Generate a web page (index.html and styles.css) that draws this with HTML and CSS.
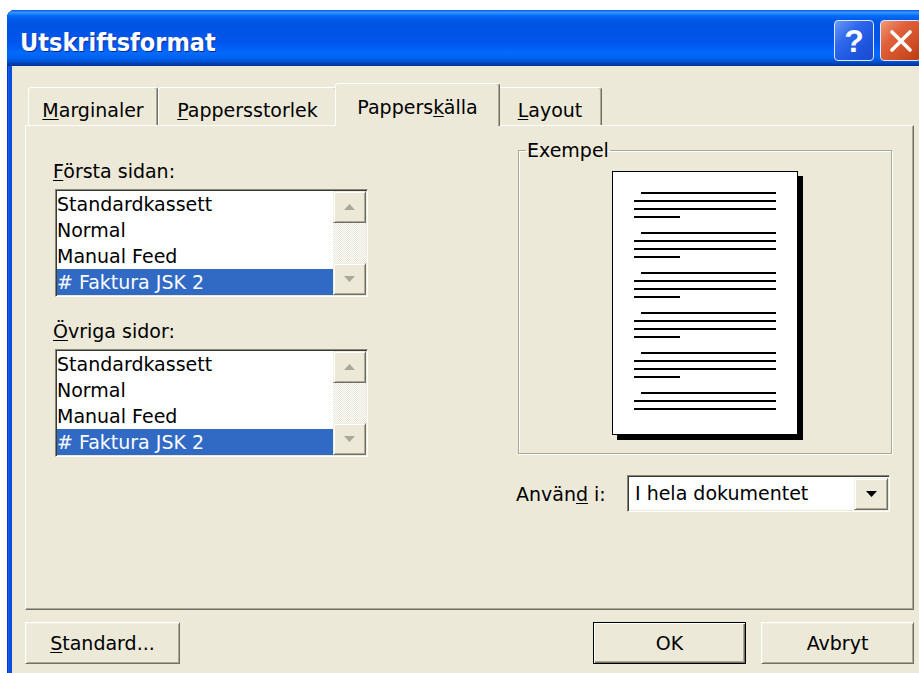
FILE: index.html
```html
<!DOCTYPE html>
<html lang="sv">
<head>
<meta charset="utf-8">
<title>Utskriftsformat</title>
<link rel="stylesheet" href="styles.css">
</head>
<body>
<div class="window">
  <div class="titlebar">
    <span class="title">Utskriftsformat</span>
    <div class="caption-buttons">
      <span class="cbtn help">?</span>
      <span class="cbtn close">
        <svg width="26" height="26" viewBox="0 0 26 26"><path d="M4 4 L22 22 M22 4 L4 22" stroke="#fff" stroke-width="3.6" stroke-linecap="round"/></svg>
      </span>
    </div>
  </div>

  <div class="client">
    <div class="tabs">
      <div class="tab tab-margins"><u>M</u>arginaler</div>
      <div class="tab tab-size"><u>P</u>appersstorlek</div>
      <div class="tab tab-source active">Pappers<u>k</u>älla</div>
      <div class="tab tab-layout"><u>L</u>ayout</div>
    </div>

    <div class="panel">
      <div class="col-left">
        <label class="field-label"><u>F</u>örsta sidan:</label>
        <div class="listbox">
          <ul class="items">
            <li>Standardkassett</li>
            <li>Normal</li>
            <li>Manual Feed</li>
            <li class="selected"># Faktura JSK 2</li>
          </ul>
          <div class="vscroll">
            <span class="sbtn"><svg width="11" height="6" viewBox="0 0 11 6"><polygon points="5.5,0 11,6 0,6" fill="#aca899"/></svg></span>
            <span class="track"></span>
            <span class="sbtn"><svg width="11" height="6" viewBox="0 0 11 6"><polygon points="0,0 11,0 5.5,6" fill="#aca899"/></svg></span>
          </div>
        </div>

        <label class="field-label"><u>Ö</u>vriga sidor:</label>
        <div class="listbox">
          <ul class="items">
            <li>Standardkassett</li>
            <li>Normal</li>
            <li>Manual Feed</li>
            <li class="selected"># Faktura JSK 2</li>
          </ul>
          <div class="vscroll">
            <span class="sbtn"><svg width="11" height="6" viewBox="0 0 11 6"><polygon points="5.5,0 11,6 0,6" fill="#aca899"/></svg></span>
            <span class="track"></span>
            <span class="sbtn"><svg width="11" height="6" viewBox="0 0 11 6"><polygon points="0,0 11,0 5.5,6" fill="#aca899"/></svg></span>
          </div>
        </div>
      </div>

      <div class="col-right">
        <fieldset class="group">
          <legend>Exempel</legend>
          <div class="page">
            <svg width="184" height="262" viewBox="0 0 184 262" fill="#000">
              <g>
                <rect x="28" y="20" width="135" height="2"/>
                <rect x="21" y="28" width="142" height="2"/>
                <rect x="21" y="36" width="142" height="2"/>
                <rect x="21" y="44" width="46" height="2"/>
              </g>
              <g transform="translate(0 40)">
                <rect x="28" y="20" width="135" height="2"/>
                <rect x="21" y="28" width="142" height="2"/>
                <rect x="21" y="36" width="142" height="2"/>
                <rect x="21" y="44" width="46" height="2"/>
              </g>
              <g transform="translate(0 80)">
                <rect x="28" y="20" width="135" height="2"/>
                <rect x="21" y="28" width="142" height="2"/>
                <rect x="21" y="36" width="142" height="2"/>
                <rect x="21" y="44" width="46" height="2"/>
              </g>
              <g transform="translate(0 120)">
                <rect x="28" y="20" width="135" height="2"/>
                <rect x="21" y="28" width="142" height="2"/>
                <rect x="21" y="36" width="142" height="2"/>
                <rect x="21" y="44" width="46" height="2"/>
              </g>
              <g transform="translate(0 160)">
                <rect x="28" y="20" width="135" height="2"/>
                <rect x="21" y="28" width="142" height="2"/>
                <rect x="21" y="36" width="142" height="2"/>
                <rect x="21" y="44" width="46" height="2"/>
              </g>
              <g transform="translate(0 200)">
                <rect x="28" y="20" width="135" height="2"/>
                <rect x="21" y="28" width="142" height="2"/>
                <rect x="21" y="36" width="142" height="2"/>
              </g>
            </svg>
          </div>
        </fieldset>

        <div class="apply-row">
          <span class="apply-label">Använ<u>d</u> i:</span>
          <div class="combo">
            <span class="combo-text">I hela dokumentet</span>
            <span class="combo-btn"><svg width="11" height="6" viewBox="0 0 11 6"><polygon points="0,0 11,0 5.5,6" fill="#000"/></svg></span>
          </div>
        </div>
      </div>
    </div>

    <div class="buttons">
      <button class="btn btn-wide"><u>S</u>tandard...</button>
      <button class="btn default">OK</button>
      <button class="btn">Avbryt</button>
    </div>
  </div>
</div>
</body>
</html>
```

FILE: styles.css
```css
html, body {
  margin: 0;
  height: 100%;
  overflow: hidden;
  background: #fff;
}

body {
  font-family: "DejaVu Sans", "Noto Sans", sans-serif;
  font-size: 19px;
  color: #000;
}

u {
  text-decoration: underline;
  text-underline-offset: 2px;
}

/* ---------- window frame ---------- */
.window {
  margin: 10px 0 0 7px;
  width: 922px;
  height: 663px;
  display: flex;
  flex-direction: column;
  background: #0b4fdf;
  border-radius: 8px 8px 0 0;
  box-shadow: inset 1px 0 #0831d9, inset 2px 0 #1660ea;
}

.titlebar {
  flex: none;
  height: 56px;
  display: flex;
  align-items: flex-start;
  padding: 0 8px 0 13px;
  border-radius: 8px 8px 0 0;
  background: linear-gradient(to bottom,
    #0058ee 0%, #3a93ff 4%, #288eff 6%, #127dff 8%, #036ffc 10%,
    #0262ee 14%, #0057e5 20%, #0054e3 24%, #0055eb 56%, #005bf5 66%,
    #026afe 76%, #0062ef 86%, #0052d6 92%, #0040ab 96%, #003092 100%);
}

.title {
  padding-top: 18px;
  font-family: "DejaVu Sans Condensed", "DejaVu Sans", sans-serif;
  font-stretch: condensed;
  font-weight: bold;
  font-size: 25px;
  line-height: 30px;
  color: #fff;
  text-shadow: 1px 1px 0 #0a2a9a;
}

.caption-buttons {
  margin-left: auto;
  margin-top: 10px;
  display: flex;
  gap: 6px;
}

.cbtn {
  box-sizing: border-box;
  width: 40px;
  height: 41px;
  border: 1px solid #dfe8fb;
  border-radius: 4px;
  display: flex;
  align-items: center;
  justify-content: center;
}

.help {
  background: linear-gradient(135deg, #6c9bf8 0%, #2f68ec 35%, #1d55de 70%, #1a4bcc 100%);
  color: #fff;
  font-family: "Liberation Sans", Arial, sans-serif;
  font-weight: bold;
  font-size: 32px;
  line-height: 1;
}

.close {
  width: 41px;
  background: linear-gradient(135deg, #f09a78 0%, #e0603a 35%, #d04e24 70%, #b83a14 100%);
}

/* ---------- dialog body ---------- */
.client {
  flex: 1;
  margin: 0 5px;
  padding: 17px 10px 0 13px;
  background: #ece9d8;
}

.tabs {
  display: flex;
  align-items: flex-end;
  height: 42px;
  margin-left: 3px;
}

.tab {
  box-sizing: border-box;
  height: 38px;
  padding-top: 11px;
  line-height: 22px;
  text-align: center;
  white-space: nowrap;
  background: #ece9d8;
  border: 1px solid #fff;
  border-bottom: none;
  border-right-color: #716f64;
  border-radius: 3px 3px 0 0;
  box-shadow: inset -1px 0 #aca899;
}

.tab-margins { width: 130px; }
.tab-size    { width: 179px; }
.tab-source  { width: 165px; }
.tab-layout  { width: 104px; }

.tab.active {
  height: 43px;
  padding-top: 12px;
  margin: 0 -2px -1px;
  position: relative;
  z-index: 1;
}

.panel {
  box-sizing: border-box;
  height: 485px;
  display: flex;
  justify-content: space-between;
  padding: 0 21px 0 27px;
  border: 1px solid #fff;
  border-right-color: #716f64;
  border-bottom-color: #716f64;
  box-shadow: inset -1px -1px #aca899;
}

/* ---------- paper source lists ---------- */
.col-left {
  width: 315px;
  padding-top: 34px;
}

.field-label {
  display: block;
  line-height: 22px;
  margin-bottom: 7px;
}

.listbox {
  box-sizing: border-box;
  width: 313px;
  height: 108px;
  margin: 0 0 23px 2px;
  padding: 1px;
  display: flex;
  background: #fff;
  border: 1px solid;
  border-color: #8a877a #fff #fff #8a877a;
  box-shadow: inset 1px 1px #3b3a33, inset -1px -1px #ece9d8;
}

.items {
  list-style: none;
  margin: 0;
  padding: 0;
  flex: 1;
}

.items li {
  height: 26px;
  line-height: 27px;
  white-space: nowrap;
}

.items li.selected {
  background: #316ac5;
  color: #fff;
}

.vscroll {
  width: 33px;
  display: flex;
  flex-direction: column;
}

.sbtn {
  box-sizing: border-box;
  height: 32px;
  display: flex;
  align-items: center;
  justify-content: center;
  background: #ece9d8;
  border: 1px solid;
  border-color: #f1efe2 #716f64 #716f64 #f1efe2;
  box-shadow: inset 1px 1px #fff, inset -1px -1px #aca899;
}

.track {
  flex: 1;
  background: repeating-conic-gradient(#fff 0 25%, #e9e6d8 0 50%) 0 0 / 2px 2px;
}

/* ---------- preview group ---------- */
.col-right {
  width: 374px;
  padding-top: 14px;
}

.group {
  margin: 0;
  padding: 0 0 18px;
  border: 1px solid #aca899;
  box-shadow: 1px 1px 0 #fff, inset 1px 1px 0 #fff;
}

.group legend {
  margin-left: 7px;
  padding: 0 1px;
  line-height: 20px;
}

.page {
  box-sizing: border-box;
  width: 186px;
  height: 264px;
  margin: 11px auto 0;
  background: #fff;
  border: 1px solid #000;
  box-shadow: 5px 5px 0 #000;
}

.page svg {
  display: block;
}

.apply-row {
  display: flex;
  align-items: center;
  justify-content: space-between;
  margin: 21px 2px 0 -2px;
}

.combo {
  box-sizing: border-box;
  width: 263px;
  height: 37px;
  display: flex;
  padding: 2px 1px 1px 1px;
  background: #fff;
  border: 1px solid;
  border-color: #8a877a #fff #fff #8a877a;
  box-shadow: inset 1px 1px #3b3a33, inset -1px -1px #ece9d8;
}

.combo-text {
  flex: 1;
  padding-left: 6px;
  line-height: 31px;
  white-space: nowrap;
}

.combo-btn {
  box-sizing: border-box;
  width: 34px;
  display: flex;
  align-items: center;
  justify-content: center;
  background: #ece9d8;
  border: 1px solid;
  border-color: #f1efe2 #716f64 #716f64 #f1efe2;
  box-shadow: inset 1px 1px #fff, inset -1px -1px #aca899;
}

/* ---------- command buttons ---------- */
.buttons {
  display: flex;
  gap: 15px;
  margin-top: 12px;
}

.btn {
  box-sizing: border-box;
  width: 153px;
  height: 42px;
  padding: 0;
  font: inherit;
  color: #000;
  background: #ece9d8;
  border: 1px solid;
  border-color: #fff #716f64 #716f64 #fff;
  box-shadow: inset 1px 1px #f1efe2, inset -1px -1px #aca899;
}

.btn-wide {
  width: 155px;
  margin-right: auto;
}

.btn.default {
  border-color: #000;
  box-shadow: inset 1px 1px #fff, inset -1px -1px #716f64, inset -2px -2px #aca899;
}
```
